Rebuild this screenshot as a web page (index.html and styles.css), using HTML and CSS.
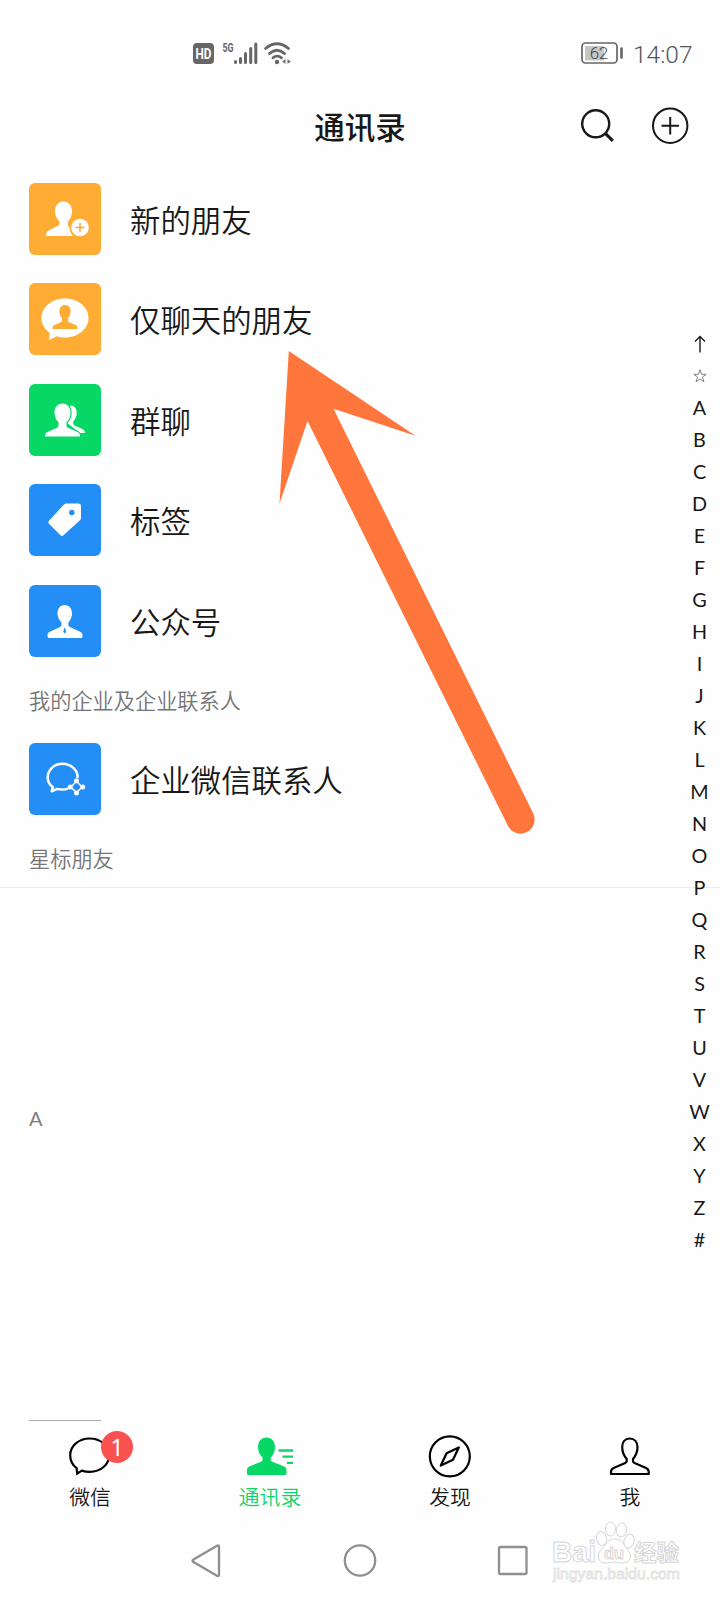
FILE: index.html
```html
<!DOCTYPE html>
<html lang="zh-CN">
<head>
<meta charset="utf-8">
<title>通讯录</title>
<link rel="stylesheet" href="styles.css">
</head>
<body>
<div class="phone">
  <header class="status">
    <svg class="signals" width="100" height="26" viewBox="193 41 100 26">
      <rect x="193" y="43" width="21" height="21" rx="4" fill="#666"/>
      <text x="203.5" y="58.5" class="hd" textLength="16" lengthAdjust="spacingAndGlyphs">HD</text>
      <text x="222.500" y="51.500" class="five" textLength="11" lengthAdjust="spacingAndGlyphs">5G</text>
      <path d="M235.500 62.500V61.500M240.500 62.500V58.500M245.500 62.500V53.500M250.700 62.500V48.500M255.800 62.500V44" fill="none" stroke="#666" stroke-width="3" stroke-linecap="round"/>
      <path d="M265.500 48.500Q277 39 288.500 48.500M269.500 53.500Q277 47 284.500 53.500M273 57.800Q277 54.500 281.500 57.800" fill="none" stroke="#666" stroke-width="2.700" stroke-linecap="round"/>
      <circle cx="277" cy="62" r="2.200" fill="#666"/>
      <path d="M285.500 59v5l-3.500-2.500zM287.500 59v5l3.500-2.500z" fill="#777"/>
    </svg>
    <div class="power">
      <svg width="43" height="24" viewBox="581 41 43 24">
        <rect x="582" y="43" width="35" height="20" rx="3.500" fill="none" stroke="#666" stroke-width="1.700"/>
        <rect x="585" y="46" width="19" height="14.500" rx="1" fill="#c6c6c6"/>
        <path d="M621.500 48.500v9" stroke="#666" stroke-width="2.600" stroke-linecap="round"/>
        <text x="599" y="59.200" class="pct" textLength="18.500">62</text>
      </svg>
      <span class="time">14:07</span>
    </div>
  </header>

  <div class="titlebar">
    <h1>通讯录</h1>
    <div class="actions">
      <svg width="34" height="34" viewBox="581 109 34 34" fill="none" stroke="#181818" stroke-width="2.400">
        <circle cx="595.700" cy="123.800" r="13.500"/><path d="M605.300 133.400l7.500 7.500" stroke-width="3"/>
      </svg>
      <svg width="38" height="38" viewBox="651 107 38 38" fill="none" stroke="#181818" stroke-width="2">
        <circle cx="670.200" cy="125.700" r="17.200"/><path d="M661.500 125.700h17.500M670.200 117v17.500"/>
      </svg>
    </div>
  </div>

  <main class="contacts">
    <div class="row"><svg class="tile orange" viewBox="0 0 72 72">
      <path d="M34.500 18.500c5 0 8.500 4 8.500 9.500 0 4-1.200 7.500-4 10.500v4c0 2 8 3 3 8.500l2.500 2H17c0-4 1.500-5 4.500-6.500l8-4c1-.6 1-1.500 1-4-2.800-3-4.500-6.500-4.500-10.500 0-5.500 3.500-9.500 8.500-9.500z" fill="#fff"/>
      <circle cx="51" cy="44.500" r="10.500" fill="#ffac35"/><circle cx="51" cy="44.500" r="8.800" fill="#fff"/>
      <path d="M46.500 44.500h9M51 40v9" stroke="#ffac35" stroke-width="1.600"/></svg><span>新的朋友</span></div>
    <div class="row"><svg class="tile orange" viewBox="0 0 72 72">
      <path d="M36 15.500c13 0 23.500 8.500 23.500 19.500S49 54.500 36 54.500c-3 0-6-.4-8.500-1.200L20 57.500l.8-7.500C15.800 46.500 12.500 41 12.500 35 12.500 24 23 15.500 36 15.500z" fill="#fff"/>
      <path d="M36 22c3.400 0 5.600 2.500 5.600 6.200 0 2.800-.8 5-2.600 6.900v2.500c0 1 .3 1.300 1.200 1.700l6.300 2.800c1.500.7 2 1.600 2 4H23.500c0-2.400.5-3.300 2-4l6.300-2.800c.9-.4 1.200-.7 1.200-1.700v-2.500c-1.800-1.900-2.600-4.100-2.600-6.900 0-3.700 2.200-6.200 5.600-6.200z" fill="#ffac35"/></svg><span>仅聊天的朋友</span></div>
    <div class="row"><svg class="tile green" viewBox="0 0 72 72">
      <path d="M41.500 21.500c4 0 6.200 3 6.200 7.500 0 3.500-1.500 6.500-3.500 8.500 0 3 .3 3.600 2.500 4.600l6 2.600c2.200 1 3.200 2 3.200 4.300h-5L37 38z" fill="#fff"/>
      <path d="M33.500 19.500c5 0 8 4 8 9 0 4-1.500 7.500-4 9.800v3c0 1.600.5 2 2 2.700l9 4c2 1 2.500 2 2.500 4.500H16c0-2.500.5-3.500 2.500-4.500l9-4c1.500-.7 2-1.100 2-2.700v-3c-2.500-2.300-4-5.800-4-9.800 0-5 3-9 8-9z" fill="#fff" stroke="#06d765" stroke-width="2.400" paint-order="stroke"/></svg><span>群聊</span></div>
    <div class="row"><svg class="tile blue" viewBox="0 0 72 72">
      <path d="M37 19.500h12.500q2.500 0 2.500 2.500V34q0 1.200-.8 2L34.500 51.200q-1.500 1.500-3 0L20 39.700q-1.300-1.400 0-2.900L35 20.500q.8-1 2-1z" fill="#fff"/><circle cx="42.800" cy="28.500" r="2.700" fill="#238ef5"/></svg><span>标签</span></div>
    <div class="row"><svg class="tile blue" viewBox="0 0 72 72">
      <path d="M35.500 20c4.500 0 7.500 3.500 7.500 8.500 0 3.500-1.500 6.800-3.600 9v2.300c0 1.200.3 1.600 1.500 2.200l9.100 4.200c2.200 1 3.500 2 3.500 3.800v1.500q0 1.500-1.500 1.500h-32q-1.500 0-1.500-1.500V50c0-1.800 1.300-2.800 3.500-3.800l9-4.200c1.200-.6 1.500-1 1.500-2.200v-2.300c-2.100-2.200-4-5.500-4-9 0-5 2.800-8.500 7-8.500z" fill="#fff"/><path d="M35.700 42.500l.8 1.500.6 3-1.400 1.500-1.400-1.500.6-3z" fill="#238ef5"/></svg><span>公众号</span></div>
    <h2 class="company">我的企业及企业联系人</h2>
    <div class="row"><svg class="tile blue" viewBox="0 0 72 72" fill="none" stroke="#fff" stroke-width="2.500" stroke-linejoin="round">
      <path d="M48.500 35C49.500 27.500 42 20.800 33.500 20.800S18.700 27 18.700 34.500c0 4 1.800 7.300 5 9.500l-.9 4.300 5.200-2.400c4 .9 8 .9 11-.3"/>
      <path d="M47.500 38.500l5.700 5.500-5.700 5.500-5.700-5.500z" stroke-width="1.500"/>
      <g fill="#fff" stroke="none"><circle cx="47.500" cy="37.800" r="2.500"/><circle cx="53.800" cy="44" r="2.500"/><circle cx="47.500" cy="50" r="2.500"/><circle cx="41.200" cy="44" r="2.500"/></g></svg><span>企业微信联系人</span></div>
    <h2 class="ruled">星标朋友</h2>
    <div class="group">A</div>
    <div class="cut"></div>
  </main>

  <nav class="tabs">
    <div class="tab"><svg width="46" height="48" viewBox="67 1432 46 48" fill="none" stroke="#000" stroke-width="2.200">
      <path d="M89.700 1438.500c11 0 19.500 7.500 19.500 16.700s-8.500 16.700-19.500 16.700c-2.800 0-5.500-.5-7.900-1.300l-4.600 3-.6-5.500c-4-3-6.400-7.600-6.400-12.900 0-9.200 8.500-16.700 19.500-16.700z"/></svg><span>微信</span><b class="badge">1</b></div>
    <div class="tab active"><svg width="50" height="48" viewBox="245 1432 50 48">
      <path d="M266.500 1437.500c5.200 0 8.500 4 8.500 9.500 0 4.500-1.700 8.200-4.200 10.500v2.200c0 1 .3 1.500 1.500 2l10.700 4.200c2.500 1 3.500 2 3.500 4v3.500q0 1.500-1.500 1.500h-36.500q-1.500 0-1.500-1.500v-3.500c0-2 1-3 3.500-4l10.500-4.200c1.200-.5 1.500-1 1.500-2v-2.200c-2.500-2.300-4.500-6-4.500-10.500 0-5.500 3.300-9.500 8.500-9.500z" fill="#06d765"/>
      <path d="M278.500 1450.500H293M282.500 1456.600H293M287 1462.800h6" stroke="#10d46a" stroke-width="2.300"/></svg><span>通讯录</span></div>
    <div class="tab"><svg width="46" height="48" viewBox="427 1432 46 48" fill="none" stroke="#000" stroke-width="2.200">
      <circle cx="449.800" cy="1456.300" r="20"/><path d="M458.800 1447.500l-5.800 12.200-12.200 5.800 5.800-12.200z" stroke-linejoin="round"/></svg><span>发现</span></div>
    <div class="tab"><svg width="46" height="48" viewBox="607 1432 46 48" fill="none" stroke="#000" stroke-width="2.200" stroke-linejoin="round">
      <path d="M629.700 1438.500c4.800 0 7.800 3.500 7.800 8.700 0 4.500-1.400 8-4.500 11.800v2c0 1.100.3 1.500 1.500 2l11 4.700c2.300 1 3.200 2 3.200 4v2.300h-37.700v-2.300c0-2 .9-3 3.200-4l11-4.700c1.200-.5 1.500-.9 1.500-2v-2c-3.100-3.800-4.500-7.300-4.500-11.800 0-5.200 2.700-8.700 7.500-8.700z"/></svg><span>我</span></div>
  </nav>

  <footer class="keys">
    <svg width="338" height="34" viewBox="190 1543 338 34" fill="none" stroke="#8f8f8f" stroke-width="2.300" stroke-linejoin="round">
      <path d="M217 1545.800q2-1 2 1v28q0 2-2 1l-23.500-13.700q-2-1.300 0-2.600z"/><circle cx="360" cy="1560.500" r="15.200"/><rect x="499" y="1547" width="27.500" height="27" rx="1.500"/>
    </svg>
  </footer>

  <aside class="index">
    <i><svg width="12" height="18" viewBox="0 0 12 18" fill="none" stroke="#181818" stroke-width="1.400"><path d="M6 17.500V1.500M1 6.500l5-5 5 5"/></svg></i><i><svg width="14" height="14" viewBox="0 0 14 14" fill="none" stroke="#666" stroke-width=".8"><path d="M7 .8l1.500 4.500h4.700L9.400 8l1.500 4.700L7 9.900l-3.900 2.800L4.600 8 .8 5.300h4.700z"/></svg></i><i>A</i><i>B</i><i>C</i><i>D</i><i>E</i><i>F</i><i>G</i><i>H</i><i>I</i><i>J</i><i>K</i><i>L</i><i>M</i><i>N</i><i>O</i><i>P</i><i>Q</i><i>R</i><i>S</i><i>T</i><i>U</i><i>V</i><i>W</i><i>X</i><i>Y</i><i>Z</i><i>#</i>
  </aside>

  <svg class="arrow" width="270" height="500" viewBox="270 340 270 500">
    <path d="M288.800 351L415.500 435.800 333.500 408.700 533 813A13.800 13.800 0 0 1 508 826L307.500 421 279.500 503.500Z" fill="#ff763d"/>
  </svg>

  <svg class="mark" width="140" height="70" viewBox="546 1516 140 70">
    <g fill="#fff" stroke="#d6d6d6" stroke-width="1">
      <ellipse cx="601.500" cy="1538.500" rx="5" ry="7" transform="rotate(-12 601.500 1538.500)"/><ellipse cx="610.500" cy="1529" rx="5" ry="7"/><ellipse cx="621.500" cy="1530" rx="5" ry="7" transform="rotate(10 621.500 1530)"/><ellipse cx="629" cy="1541" rx="5" ry="7" transform="rotate(15 629 1541)"/>
      <path d="M615 1539c8 0 9 7 13 11 5 6 2 13-5 13-4 0-6-1-9-1s-5 1-9 1c-7 0-9-8-4-13 4-4 6-11 14-11z"/>
      <text x="552" y="1562" class="brand" textLength="44" lengthAdjust="spacingAndGlyphs">Bai</text>
      <text x="634" y="1561" class="brand-cn" textLength="45" lengthAdjust="spacingAndGlyphs">经验</text>
      <text x="604" y="1559" class="du" textLength="20" lengthAdjust="spacingAndGlyphs">du</text>
      <text x="553" y="1579" class="site" textLength="127" lengthAdjust="spacingAndGlyphs">jingyan.baidu.com</text>
    </g>
  </svg>
</div>
</body>
</html>
```
FILE: styles.css
```css
* { box-sizing: border-box; }
body { margin: 0; background: #fefefe; color: #181818; font-family: Lato, "Noto Sans CJK SC", sans-serif; }
svg { display: block; flex: none; }
.phone { position: relative; width: 720px; height: 1600px; display: flex; flex-direction: column; overflow: hidden; }

.status { height: 89px; padding: 41px 28px 0 193px; display: flex; justify-content: space-between; align-items: flex-start; }
.hd { font: 700 14px Roboto, sans-serif; fill: #fff; text-anchor: middle; }
.five { font: 700 12px Roboto, sans-serif; fill: #666; }
.pct { font: 300 17px Roboto, sans-serif; fill: #444; text-anchor: middle; }
.power { display: flex; gap: 9px; }
.time { width: 59px; font: 300 24.5px/28px Roboto, sans-serif; color: #555; white-space: nowrap; }

.titlebar { height: 79px; display: grid; grid-template-columns: 1fr auto 1fr; align-items: center; padding-right: 31px; padding-left: 31px; }
.titlebar h1 { grid-column: 2; margin: 0; padding-bottom: 6px; font: 500 30.5px/44px "Noto Sans CJK SC", sans-serif; }
.actions { display: flex; justify-content: flex-end; align-items: center; gap: 36px; padding-bottom: 5px; }

.contacts { flex: 1; display: flex; flex-direction: column; padding-top: .6px; }
.row { height: 100.5px; padding-left: 29px; display: flex; align-items: center; gap: 29px; font: 350 30.4px/44px "Noto Sans CJK SC", sans-serif; }
.tile { width: 72px; height: 72px; border-radius: 6px; }
.orange { background: #ffac35; }
.green { background: #06d765; }
.blue { background: #238ef5; }
.contacts h2 { height: 58px; margin: 0; padding-left: 29px; font: 350 21.2px/58px "Noto Sans CJK SC", sans-serif; color: #757575; }
.contacts .company { height: 57.4px; line-height: 57px; }
.contacts .ruled { height: 59px; border-bottom: 1px solid #ebebeb; }
.group { margin-top: 215px; padding-left: 29px; font-size: 20px; line-height: 31px; height: 32px; color: #7d7d7d; }
.cut { width: 72px; height: 1px; margin: 285px 0 0 29px; background: #aaa; }

.tabs { height: 100px; display: grid; grid-template-columns: repeat(4, 1fr); }
.tab { position: relative; display: flex; flex-direction: column; align-items: center; padding-top: 8px; font: 350 20.8px/33px "Noto Sans CJK SC", sans-serif; }
.active { color: #10d46a; }
.badge { position: absolute; left: 101px; top: 7px; width: 32px; height: 32px; border-radius: 50%; background: #fa5151; color: #fff; font: 400 23px/32px "Noto Sans", sans-serif; text-align: center; }
.keys { height: 76px; padding: 19px 0 0 190px; }

.index { position: absolute; left: 680px; top: 327px; width: 39px; display: flex; flex-direction: column; }
.index i { height: 32px; display: flex; justify-content: center; align-items: center; font-style: normal; font-size: 19.8px; line-height: 32px; }
.index svg { margin-top: 2px; }
.arrow { position: absolute; left: 270px; top: 340px; }
.mark { position: absolute; left: 546px; top: 1516px; }
.brand { font: 700 29px "Liberation Sans", sans-serif; }
.brand-cn { font: 700 23px "Noto Sans CJK SC", sans-serif; }
.du { font: 700 17px "Liberation Sans", sans-serif; }
.site { font: 400 15px "Liberation Sans", sans-serif; stroke: #e0e0e0; stroke-width: .8px; }
```
